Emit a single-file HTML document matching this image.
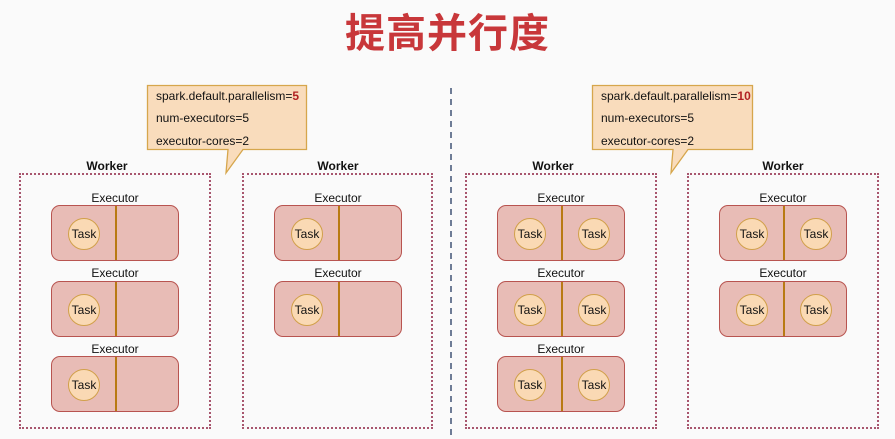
<!DOCTYPE html>
<html><head><meta charset="utf-8">
<style>
html,body{margin:0;padding:0}
body{width:895px;height:439px;background:#fafafa;position:relative;overflow:hidden;font-family:"Liberation Sans","Noto Sans CJK SC",sans-serif;color:#111}
.a{position:absolute}
.title{left:0;width:895px;top:1px;text-align:center;font-size:40px;font-weight:bold;color:#c8373a;font-family:"Liberation Sans","Noto Sans CJK SC",sans-serif;letter-spacing:1px}
.worker{border:2px dotted #a8566e;box-sizing:border-box}
.wl{font-weight:bold;font-size:12px;text-align:center;width:100px}
.el{font-size:12px;text-align:center;width:128px}
.ex{width:128px;height:56px;box-sizing:border-box;border:1.3px solid #b85450;border-radius:9px;background:#e8bcb6}
.div{width:2px;background:#b87a14;top:0;bottom:0;left:63px}
.task{width:32px;height:32px;box-sizing:border-box;border-radius:50%;background:#fad9b4;border:1.5px solid #d1a04a;font-size:12px;display:flex;align-items:center;justify-content:center;top:12px}
.cl{font-size:12px;left:10px}
.cl b{color:#b22222}
</style></head><body>
<div class="a title">提高并行度</div>

<svg class="a" style="left:0;top:0" width="895" height="439">
<path d="M147.5 85.5 H306.5 V149.5 H243 L226 173 L228 149.5 H147.5 Z" fill="#f9dcbc" stroke="#d6a64c" stroke-width="1.3"/>
<path d="M592.5 85.5 H752.5 V149.5 H688 L671 173 L673 149.5 H592.5 Z" fill="#f9dcbc" stroke="#d6a64c" stroke-width="1.3"/>
<line x1="451" y1="88" x2="451" y2="439" stroke="#3f5275" stroke-width="1.5" stroke-dasharray="6,5"/>
</svg>
<div class="a cl" style="left:156px;top:89px">spark.default.parallelism=<b>5</b></div>
<div class="a cl" style="left:156px;top:111px">num-executors=5</div>
<div class="a cl" style="left:156px;top:134px">executor-cores=2</div>
<div class="a cl" style="left:601px;top:89px">spark.default.parallelism=<b>10</b></div>
<div class="a cl" style="left:601px;top:111px">num-executors=5</div>
<div class="a cl" style="left:601px;top:134px">executor-cores=2</div>

<div class="a wl" style="left:57px;top:159px">Worker</div>
<div class="a worker" style="left:19px;top:173px;width:192px;height:256px"></div>
<div class="a wl" style="left:288px;top:159px">Worker</div>
<div class="a worker" style="left:242px;top:173px;width:191px;height:256px"></div>
<div class="a wl" style="left:503px;top:159px">Worker</div>
<div class="a worker" style="left:465px;top:173px;width:192px;height:256px"></div>
<div class="a wl" style="left:733px;top:159px">Worker</div>
<div class="a worker" style="left:687px;top:173px;width:192px;height:256px"></div>

<div class="a el" style="left:51px;top:191px">Executor</div>
<div class="a ex" style="left:51px;top:205px"><div class="a div"></div><div class="a task" style="left:16px">Task</div></div>
<div class="a el" style="left:51px;top:266px">Executor</div>
<div class="a ex" style="left:51px;top:281px"><div class="a div"></div><div class="a task" style="left:16px">Task</div></div>
<div class="a el" style="left:51px;top:342px">Executor</div>
<div class="a ex" style="left:51px;top:356px"><div class="a div"></div><div class="a task" style="left:16px">Task</div></div>

<div class="a el" style="left:274px;top:191px">Executor</div>
<div class="a ex" style="left:274px;top:205px"><div class="a div"></div><div class="a task" style="left:16px">Task</div></div>
<div class="a el" style="left:274px;top:266px">Executor</div>
<div class="a ex" style="left:274px;top:281px"><div class="a div"></div><div class="a task" style="left:16px">Task</div></div>

<div class="a el" style="left:497px;top:191px">Executor</div>
<div class="a ex" style="left:497px;top:205px"><div class="a div"></div><div class="a task" style="left:16px">Task</div><div class="a task" style="left:80px">Task</div></div>
<div class="a el" style="left:497px;top:266px">Executor</div>
<div class="a ex" style="left:497px;top:281px"><div class="a div"></div><div class="a task" style="left:16px">Task</div><div class="a task" style="left:80px">Task</div></div>
<div class="a el" style="left:497px;top:342px">Executor</div>
<div class="a ex" style="left:497px;top:356px"><div class="a div"></div><div class="a task" style="left:16px">Task</div><div class="a task" style="left:80px">Task</div></div>

<div class="a el" style="left:719px;top:191px">Executor</div>
<div class="a ex" style="left:719px;top:205px"><div class="a div"></div><div class="a task" style="left:16px">Task</div><div class="a task" style="left:80px">Task</div></div>
<div class="a el" style="left:719px;top:266px">Executor</div>
<div class="a ex" style="left:719px;top:281px"><div class="a div"></div><div class="a task" style="left:16px">Task</div><div class="a task" style="left:80px">Task</div></div>
</body></html>
